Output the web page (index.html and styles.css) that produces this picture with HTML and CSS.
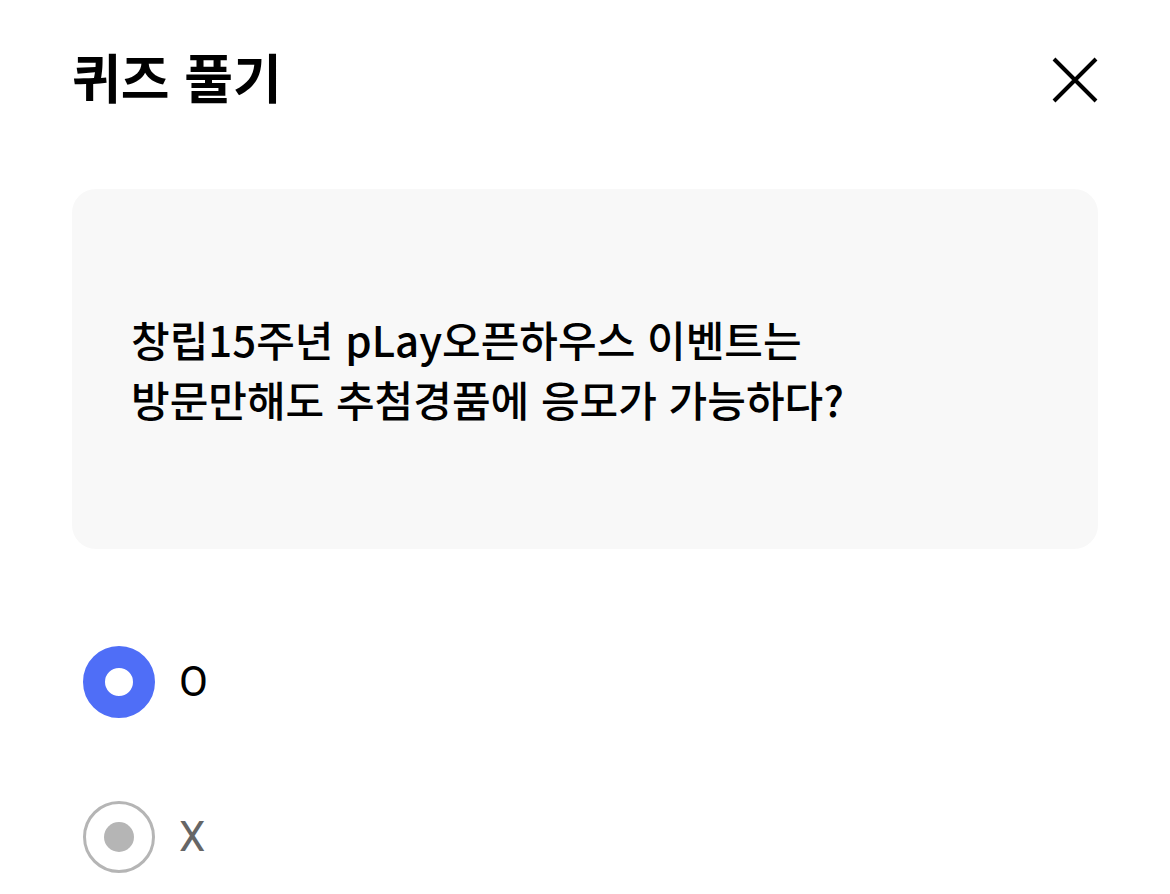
FILE: index.html
```html
<!DOCTYPE html>
<html lang="ko">
<head>
    <meta charset="UTF-8">
    <meta name="viewport" content="width=device-width, initial-scale=1.0">
    <title>퀴즈 풀기</title>
    <link rel="stylesheet" href="styles.css">
</head>
<body>
    <div class="quiz">
        <div class="quiz-header">
            <h1 class="quiz-title">퀴즈 풀기</h1>
            <button class="close-btn" aria-label="닫기">
                <svg width="48" height="48" viewBox="0 0 48 48">
                    <path d="M3 3 L45 45 M45 3 L3 45" stroke="#000" stroke-width="4" fill="none"/>
                </svg>
            </button>
        </div>

        <div class="question-box">
            <p class="question">창립15주년 pLay오픈하우스 이벤트는<br>방문만해도 추첨경품에 응모가 가능하다?</p>
        </div>

        <ul class="options">
            <li class="option selected">
                <span class="radio"></span>
                <span class="label">O</span>
            </li>
            <li class="option">
                <span class="radio"></span>
                <span class="label">X</span>
            </li>
        </ul>
    </div>
</body>
</html>
```

FILE: styles.css
```css
body {
    margin: 0;
    padding: 0;
    background-color: #fff;
    font-family: "Noto Sans CJK KR", "Noto Sans", sans-serif;
    color: #000;
}
.quiz {
    padding: 0 72px;
}
.quiz-header {
    height: 160px;
    display: flex;
    align-items: center;
    justify-content: space-between;
}
.quiz-title {
    margin: 0 0 8px;
    font-size: 53px;
    font-weight: 700;
    line-height: 64px;
}
.close-btn {
    width: 48px;
    height: 48px;
    padding: 0;
    margin-right: -1px;
    border: none;
    background: none;
    cursor: pointer;
}
.close-btn svg {
    display: block;
}
.question-box {
    margin-top: 29px;
    height: 360px;
    box-sizing: border-box;
    padding: 0 59px;
    display: flex;
    align-items: center;
    background-color: #f8f8f8;
    border-radius: 24px;
}
.question {
    margin: 0;
    font-size: 42px;
    font-weight: 500;
    line-height: 60px;
}
.options {
    list-style: none;
    margin: 97px 0 0;
    padding: 0 0 0 11px;
    display: flex;
    flex-direction: column;
    gap: 83px;
}
.option {
    display: flex;
    align-items: center;
    height: 72px;
}
.radio {
    width: 72px;
    height: 72px;
    box-sizing: border-box;
    border-radius: 50%;
    border: 3px solid #b5b5b5;
    display: flex;
    align-items: center;
    justify-content: center;
}
.radio::after {
    content: "";
    width: 30px;
    height: 30px;
    border-radius: 50%;
    background-color: #b5b5b5;
}
.option.selected .radio {
    border: 22px solid #4f6ef7;
    background-color: #fff;
}
.option.selected .radio::after {
    display: none;
}
.label {
    margin-left: 24px;
    font-family: Roboto, "Noto Sans", sans-serif;
    font-size: 42px;
    line-height: 72px;
    color: #666;
}
.option.selected .label {
    color: #000;
}
```
